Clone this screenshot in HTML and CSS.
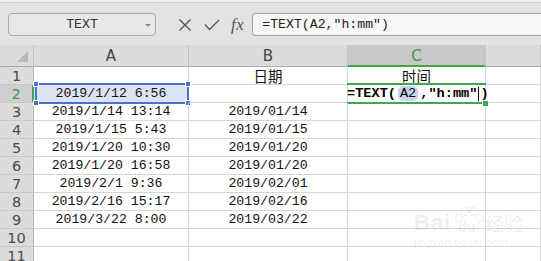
FILE: index.html
```html
<!DOCTYPE html>
<html>
<head>
<meta charset="utf-8">
<link rel="stylesheet" href="styles.css">
</head>
<body>
<div class="top"></div>
<div class="toolbar">
  <div class="namebox"><span class="nb-text">TEXT</span><span class="nb-arrow"></span></div>
  <svg class="ic ic-x" width="14" height="14" viewBox="0 0 14 14"><path d="M1.5 1.5 L12.5 12.5 M12.5 1.5 L1.5 12.5" stroke="#555" stroke-width="1.3" fill="none"/></svg>
  <svg class="ic ic-ok" width="16" height="12" viewBox="0 0 16 12"><path d="M1 5.5 L5.5 10.5 L15 1" stroke="#555" stroke-width="1.4" fill="none"/></svg>
  <span class="fx">fx</span>
  <div class="fbar">=TEXT(A2,″h:mm″)</div>
</div>
<div class="sheet">
  <div class="hd corner"><span class="tri"></span></div>
  <div class="hd">A</div>
  <div class="hd">B</div>
  <div class="hd hd-sel">C</div>
  <div class="hd"></div>

  <div class="rh">1</div><div class="c"></div><div class="c cjk">日期</div><div class="c cjk">时间</div><div class="c"></div>
  <div class="rh rh-sel">2</div>
  <div class="c ref">2019/1/12 6:56<span class="frame"><i class="h tl"></i><i class="h tr"></i><i class="h bl"></i><i class="h br"></i></span></div>
  <div class="c"></div>
  <div class="c edit"><span class="etext">=TEXT(<span class="aref">A2</span>,″h:mm″<span class="caret"></span>)</span><span class="gframe"></span><span class="fill"></span></div>
  <div class="c"></div>
  <div class="rh">3</div><div class="c">2019/1/14 13:14</div><div class="c">2019/01/14</div><div class="c"></div><div class="c"></div>
  <div class="rh">4</div><div class="c">2019/1/15 5:43</div><div class="c">2019/01/15</div><div class="c"></div><div class="c"></div>
  <div class="rh">5</div><div class="c">2019/1/20 10:30</div><div class="c">2019/01/20</div><div class="c"></div><div class="c"></div>
  <div class="rh">6</div><div class="c">2019/1/20 16:58</div><div class="c">2019/01/20</div><div class="c"></div><div class="c"></div>
  <div class="rh">7</div><div class="c">2019/2/1 9:36</div><div class="c">2019/02/01</div><div class="c"></div><div class="c"></div>
  <div class="rh">8</div><div class="c">2019/2/16 15:17</div><div class="c">2019/02/16</div><div class="c"></div><div class="c"></div>
  <div class="rh">9</div><div class="c">2019/3/22 8:00</div><div class="c">2019/03/22</div><div class="c"></div><div class="c"></div>
  <div class="rh">10</div><div class="c"></div><div class="c"></div><div class="c"></div><div class="c"></div>
  <div class="rh">11</div><div class="c"></div><div class="c"></div><div class="c"></div><div class="c"></div>
</div>
<div class="watermark">
  <div class="wm1"><span class="bai">Bai</span><span class="paw"><i class="t t1"></i><i class="t t2"></i><i class="t t3"></i><i class="t t4"></i><span class="du">du</span></span><span class="jy">经验</span></div>
  <div class="wm2">jingyan.baidu.com</div>
</div>
</body>
</html>
```
FILE: styles.css
```css
html, body {
  margin: 0;
  padding: 0;
}
body {
  width: 541px;
  height: 261px;
  overflow: hidden;
  background: #ffffff;
  position: relative;
  font-family: "Liberation Mono", "Courier New", "Cousine", monospace;
}
.top {
  height: 2px;
  background: #efefef;
  border-bottom: 1px solid #cfcfcf;
}
.toolbar {
  height: 42px;
  box-sizing: border-box;
  background: #e3e3e3;
  display: flex;
  align-items: flex-start;
  padding-top: 10px;
}
.namebox {
  margin-left: 8px;
  width: 148px;
  height: 23px;
  box-sizing: border-box;
  border: 1px solid #a9a9a9;
  border-radius: 4px;
  background: #e8e8e8;
  display: flex;
  align-items: center;
  justify-content: center;
  position: relative;
}
.nb-text {
  font-size: 13.2px;
  color: #333;
}
.nb-arrow {
  position: absolute;
  right: 4px;
  top: 10px;
  width: 0;
  height: 0;
  border-left: 3px solid transparent;
  border-right: 3px solid transparent;
  border-top: 3px solid #8a8a8a;
}
.ic { display: block; }
.ic-x { margin-left: 22px; margin-top: 5px; }
.ic-ok { margin-left: 12px; margin-top: 6px; }
.fx {
  margin-left: 11px;
  margin-top: 2px;
  font-family: "Liberation Serif", serif;
  font-style: italic;
  font-size: 17px;
  color: #555;
  letter-spacing: 0.5px;
}
.fbar {
  margin-left: 8px;
  flex: 1;
  height: 23px;
  box-sizing: border-box;
  border: 1px solid #a5a5a5;
  border-right: none;
  border-radius: 4px 0 0 4px;
  background: #f7f7f7;
  padding-left: 9px;
  display: flex;
  align-items: center;
  font-size: 13.2px;
  color: #222;
  white-space: nowrap;
}
.sheet {
  display: grid;
  grid-template-columns: 34px 155px 159px 138px 55px;
  grid-template-rows: 22px;
  grid-auto-rows: 18px;
}
.hd {
  background: #dcdcdc;
  border-right: 1px solid #c4c4c4;
  border-bottom: 1px solid #ababab;
  box-sizing: border-box;
  display: flex;
  align-items: center;
  justify-content: center;
  font-family: "DejaVu Sans", sans-serif;
  font-size: 15px;
  line-height: 16px;
  color: #444;
  padding-top: 1px;
}
.hd:last-child { border-right: none; }
.corner { position: relative; }
.tri {
  position: absolute;
  right: 5px;
  bottom: 4px;
  width: 0;
  height: 0;
  border-left: 11px solid transparent;
  border-bottom: 11px solid #b9b9b9;
}
.hd-sel {
  background: #c8c8c8;
  color: #3a9a46;
  border-bottom: 2px solid #3ea84a;
}
.rh {
  background: #dcdcdc;
  border-right: 1px solid #b5b5b5;
  border-bottom: 1px solid #c8c8c8;
  box-sizing: border-box;
  display: flex;
  align-items: center;
  justify-content: center;
  font-family: "DejaVu Sans", sans-serif;
  font-size: 14.5px;
  line-height: 16px;
  color: #4a4a4a;
}
.rh-sel {
  background: #cfcfcf;
  color: #3a9a46;
  border-right: 2px solid #3ea84a;
}
.c {
  border-right: 1px solid #d6d6d6;
  border-bottom: 1px solid #d6d6d6;
  box-sizing: border-box;
  display: flex;
  align-items: flex-end;
  justify-content: center;
  padding-bottom: 1px;
  font-size: 13.2px;
  line-height: 15px;
  color: #111;
  white-space: nowrap;
  position: relative;
}
.cjk {
  font-family: "Noto Sans CJK SC", sans-serif;
  font-size: 14.5px;
  line-height: 17px;
  padding-bottom: 0;
}
.ref {
  background: #dce3f4;
}
.frame {
  position: absolute;
  left: 1px;
  top: -2px;
  right: -1px;
  bottom: -2px;
  border: 2px solid #4a72c8;
}
.h {
  position: absolute;
  width: 4px;
  height: 4px;
  background: #4a72c8;
  border: 1px solid #ffffff;
}
.tl { left: -4px; top: -4px; }
.tr { right: -4px; top: -4px; }
.bl { left: -4px; bottom: -4px; }
.br { right: -4px; bottom: -4px; }
.edit {
  justify-content: flex-start;
  align-items: center;
  padding-bottom: 0;
  overflow: visible;
}
.etext {
  margin-left: -1px;
  font-weight: bold;
  font-size: 13.6px;
  color: #000;
  display: flex;
  align-items: center;
  position: relative;
  z-index: 2;
}
.aref {
  background: #c9d5f0;
  border-radius: 5px;
  padding: 0 2px;
  margin: 0 2px 0 2px;
  font-weight: normal;
}
.caret {
  display: inline-block;
  width: 1px;
  height: 14px;
  background: #000;
  margin: 0 1px;
}
.gframe {
  position: absolute;
  left: -1px;
  right: -1px;
  top: -2px;
  bottom: -2px;
  border-top: 2px solid #3ea84a;
  border-bottom: 2px solid #3ea84a;
}
.fill {
  position: absolute;
  right: -4px;
  bottom: -5px;
  width: 5px;
  height: 5px;
  background: #3ea84a;
  border: 1px solid #fff;
  z-index: 3;
}
.watermark {
  position: absolute;
  left: 414px;
  top: 206px;
  color: rgba(120, 120, 120, 0.13);
  font-family: "Liberation Sans", sans-serif;
}
.wm1 {
  display: flex;
  align-items: flex-end;
  height: 28px;
}
.bai {
  font-size: 22px;
  font-weight: bold;
  line-height: 22px;
  letter-spacing: 1px;
}
.paw {
  position: relative;
  width: 30px;
  height: 28px;
  margin-left: 2px;
}
.t {
  position: absolute;
  border: 1.5px solid rgba(120, 120, 120, 0.13);
  border-radius: 50%;
  width: 6px;
  height: 7px;
}
.t1 { left: 2px; top: 8px; }
.t2 { left: 8px; top: 1px; }
.t3 { left: 16px; top: 1px; }
.t4 { left: 22px; top: 8px; }
.du {
  position: absolute;
  left: 5px;
  bottom: 0;
  font-size: 14px;
  font-weight: bold;
  line-height: 14px;
}
.jy {
  font-family: "Noto Sans CJK SC", sans-serif;
  font-size: 19px;
  line-height: 22px;
  margin-left: 2px;
}
.wm2 {
  font-size: 11px;
  margin-top: 2px;
  letter-spacing: 0.3px;
}
```
